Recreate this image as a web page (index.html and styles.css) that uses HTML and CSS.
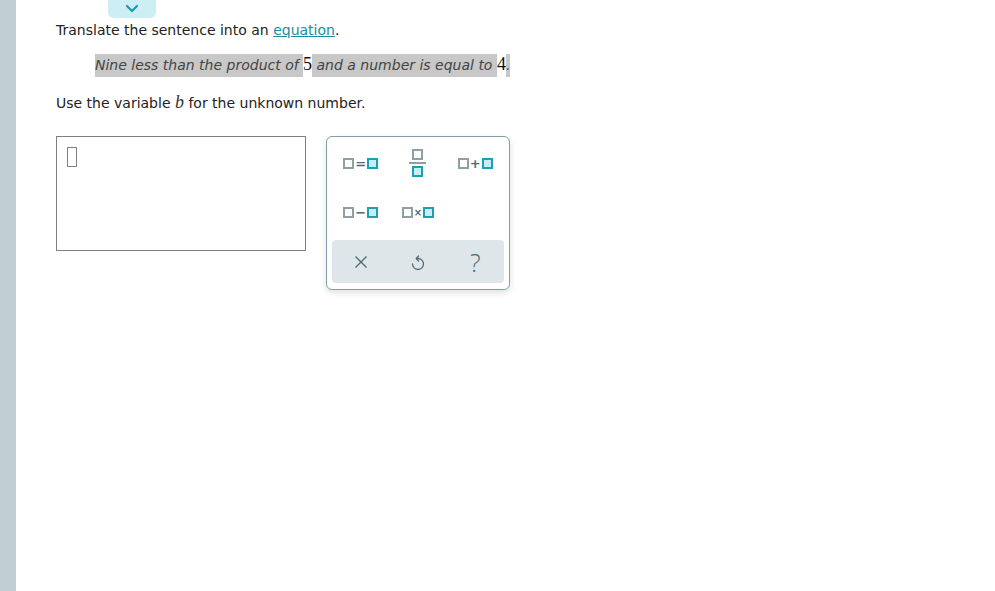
FILE: index.html
```html
<!DOCTYPE html>
<html lang="en">
<head>
    <meta charset="UTF-8">
    <title>Translate the sentence</title>
    <link rel="stylesheet" href="styles.css">
</head>
<body>
    <div class="page">
        <div class="side-bar"></div>
        <div class="main">
            <div class="tab-row">
                <span class="toggle-tab">
                    <svg width="14" height="9" viewBox="0 0 14 9"><path d="M2 2 L7 7 L12 2" fill="none" stroke="#1a9ab0" stroke-width="2.2" stroke-linecap="round" stroke-linejoin="round"/></svg>
                </span>
            </div>

            <p class="prompt first">Translate the sentence into an <a href="#" class="link">equation</a>.</p>

            <p class="sentence"><span class="hl">Nine less than the product of </span><span class="num">5</span><span class="hl"> and a number is equal to </span><span class="num">4</span><span class="hl">.</span></p>

            <p class="prompt">Use the variable <span class="var">b</span> for the unknown number.</p>

            <div class="work">
                <div class="answer-box">
                    <span class="cursor"></span>
                </div>

                <div class="keypad">
                    <div class="keys">
                        <button class="key"><span class="sq"></span><span class="op eq">=</span><span class="sq teal"></span></button>
                        <button class="key">
                            <span class="frac"><span class="sq"></span><span class="bar"></span><span class="sq teal"></span></span>
                        </button>
                        <button class="key"><span class="sq"></span><span class="op">+</span><span class="sq teal"></span></button>
                        <button class="key"><span class="sq"></span><span class="op">&minus;</span><span class="sq teal"></span></button>
                        <button class="key"><span class="sq"></span><span class="op small">&times;</span><span class="sq teal"></span></button>
                    </div>
                    <div class="actions">
                        <button class="action">
                            <svg width="16" height="16" viewBox="0 0 16 16"><path d="M2.5 2.5 L13.5 13.5 M13.5 2.5 L2.5 13.5" stroke="#4d6d75" stroke-width="1.4" fill="none"/></svg>
                        </button>
                        <button class="action">
                            <svg width="16" height="18" viewBox="0 0 16 18"><path d="M8.6 3 L6.2 5.5 L8.6 8" fill="none" stroke="#4d6d75" stroke-width="1.3" stroke-linejoin="round" stroke-linecap="round"/><path d="M6.6 5.5 L8 5.5 A5.5 5.5 0 1 1 2.5 11" fill="none" stroke="#4d6d75" stroke-width="1.3" stroke-linecap="round"/></svg>
                        </button>
                        <button class="action qmark">?</button>
                    </div>
                </div>
            </div>
        </div>
    </div>
</body>
</html>
```

FILE: styles.css
```css
html, body {
    margin: 0;
    height: 100%;
}
body {
    font-family: "DejaVu Sans", Verdana, sans-serif;
    font-size: 14px;
    color: #222;
    background: #fff;
}
.page {
    display: flex;
    min-height: 100%;
}
.side-bar {
    width: 16px;
    background: #c1cfd4;
    flex-shrink: 0;
}
.main {
    padding-left: 40px;
    flex: 1;
}
.tab-row {
    height: 19px;
    padding-left: 52px;
}
.toggle-tab {
    display: flex;
    align-items: center;
    justify-content: center;
    width: 48px;
    height: 18px;
    background: #cdeef3;
    border-radius: 0 0 6px 6px;
}
.toggle-tab svg {
    margin-top: -2px;
}
.prompt {
    margin: 0;
    line-height: 22px;
}
.prompt.first {
    margin-top: 0;
}
.link {
    color: #1a8ca3;
    text-decoration: underline;
}
.sentence {
    margin: 12px 0 14px 39px;
    line-height: 23px;
    font-style: italic;
    color: #444;
}
.hl {
    background: #c8c8c8;
    padding: 3px 0 4px;
}
.num {
    font-family: "Liberation Serif", "Times New Roman", serif;
    font-style: normal;
    font-size: 18px;
    color: #111;
}
.var {
    font-family: "Liberation Serif", "Times New Roman", serif;
    font-style: italic;
    font-size: 18px;
    color: #333;
}
.work {
    display: flex;
    align-items: flex-start;
    gap: 20px;
    margin-top: 22px;
}
.answer-box {
    width: 250px;
    height: 115px;
    border: 1px solid #808080;
    padding: 10px 0 0 10px;
    box-sizing: border-box;
}
.cursor {
    display: block;
    width: 8px;
    height: 18px;
    border: 1px solid #808080;
}
.keypad {
    width: 184px;
    height: 154px;
    box-sizing: border-box;
    border: 1px solid #7f9ea6;
    border-radius: 6px;
    box-shadow: 0 3px 6px rgba(0, 0, 0, 0.12);
    padding: 5px;
    display: flex;
    flex-direction: column;
    background: #fff;
}
.keys {
    display: grid;
    grid-template-columns: repeat(3, 1fr);
    grid-template-rows: 42px 42px;
    row-gap: 7px;
    height: 98px;
}
.key {
    display: flex;
    align-items: center;
    justify-content: center;
    gap: 1px;
    border: none;
    background: none;
    padding: 0;
    color: #4d6d75;
    font-family: "DejaVu Sans", sans-serif;
    font-weight: bold;
    font-size: 13px;
}
.sq {
    display: block;
    width: 7px;
    height: 7px;
    border: 2px solid #8ca0a6;
    background: #fff;
}
.sq.teal {
    border-color: #1e9fb3;
    background: #c6eef3;
}
.op {
    line-height: 11px;
}
.op.small {
    font-size: 10px;
}
.frac {
    display: flex;
    flex-direction: column;
    align-items: center;
    gap: 2px;
}
.bar {
    display: block;
    width: 17px;
    height: 2px;
    background: #8ca0a6;
}
.actions {
    height: 43px;
    background: #dfe6e9;
    border-radius: 4px;
    display: grid;
    grid-template-columns: repeat(3, 1fr);
}
.action {
    border: none;
    background: none;
    padding: 0;
    display: flex;
    align-items: center;
    justify-content: center;
}
.qmark {
    font-family: "Open Sans", "DejaVu Sans", sans-serif;
    font-size: 25px;
    font-weight: 300;
    color: #4d6d75;
}
```
